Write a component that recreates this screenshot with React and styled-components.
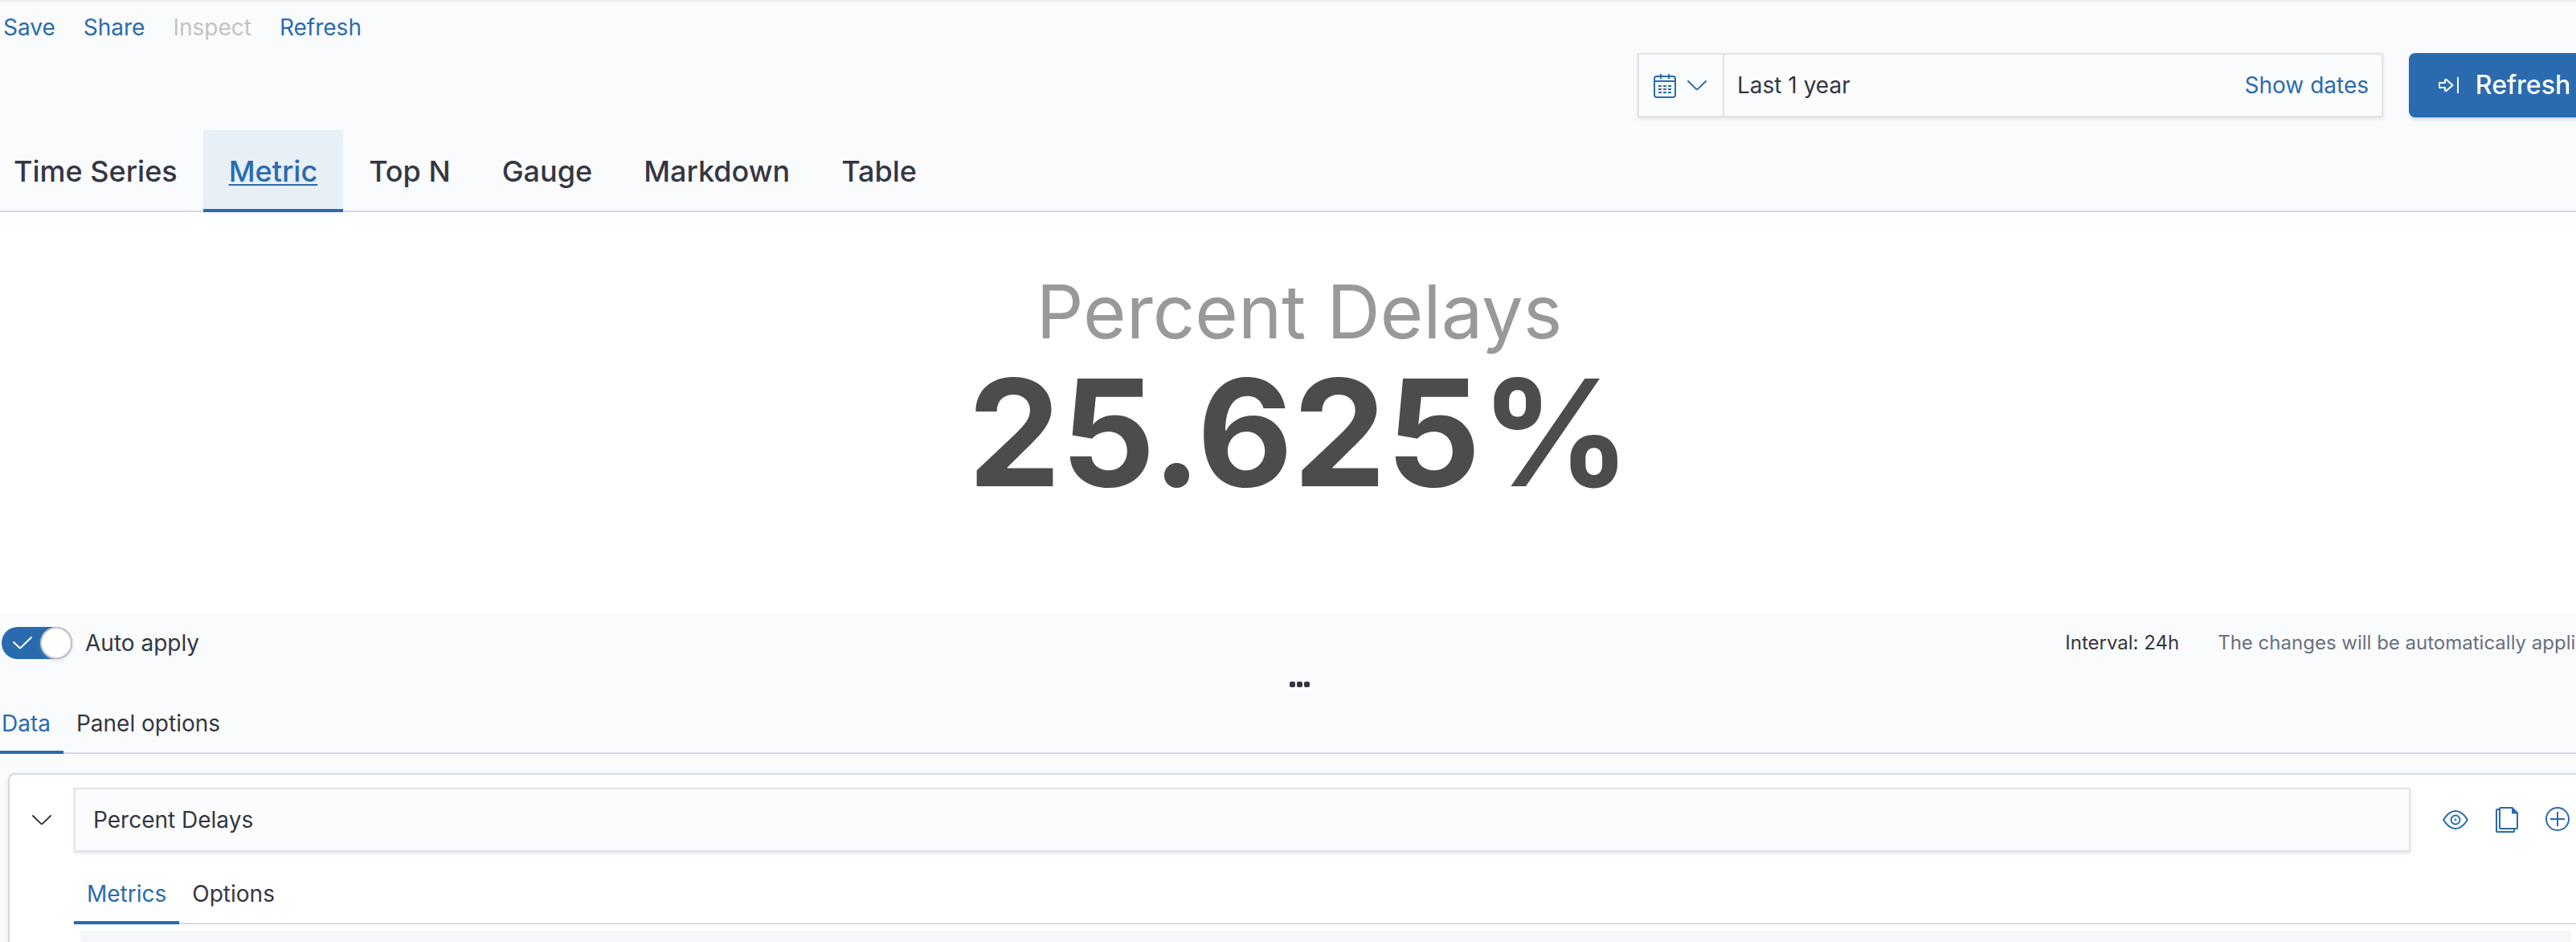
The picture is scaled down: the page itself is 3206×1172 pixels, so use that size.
import React, { useState } from "react";
import styled, { createGlobalStyle, css } from "styled-components";

const blue = "#2a6bb0";
const ink = "#343741";
const line = "#d3dae6";
const fieldLine = "#e0e2e5";

const menuItems = [
    { label: "Save" },
    { label: "Share" },
    { label: "Inspect", disabled: true },
    { label: "Refresh" },
];

const chartTypes = ["Time Series", "Metric", "Top N", "Gauge", "Markdown", "Table"];

const App = () => {
    const [chartType, setChartType] = useState("Metric");
    const [editorTab, setEditorTab] = useState("Data");
    const [seriesTab, setSeriesTab] = useState("Metrics");
    const [autoApply, setAutoApply] = useState(true);
    const [label, setLabel] = useState("Percent Delays");

    return (
        <Viewport>
            <GlobalStyle />
            <Page>
                <TopMenu>
                    {menuItems.map((item) => (
                        <MenuButton key={item.label} disabled={item.disabled}>
                            {item.label}
                        </MenuButton>
                    ))}
                </TopMenu>
                <QueryBar>
                    <DatePicker>
                        <QuickSelect aria-label="Date quick select">
                            <CalendarIcon />
                            <ChevronIcon />
                        </QuickSelect>
                        <RangeButton>
                            <span>Last 1 year</span>
                        </RangeButton>
                        <ShowDates>Show dates</ShowDates>
                    </DatePicker>
                    <RefreshButton>
                        <RefreshIcon />
                        Refresh
                    </RefreshButton>
                </QueryBar>
                <TypeTabs role="tablist">
                    {chartTypes.map((type) => (
                        <TypeTab
                            key={type}
                            role="tab"
                            aria-selected={type === chartType}
                            $active={type === chartType}
                            onClick={() => setChartType(type)}
                        >
                            {type}
                        </TypeTab>
                    ))}
                </TypeTabs>
                <MetricPanel>
                    <MetricLabel>{label}</MetricLabel>
                    <MetricValue>25.625%</MetricValue>
                </MetricPanel>
                <ControlBar>
                    <SwitchLabel htmlFor="auto-apply">
                        <SwitchBox>
                            <Switch
                                id="auto-apply"
                                type="checkbox"
                                role="switch"
                                checked={autoApply}
                                onChange={(e) => setAutoApply(e.target.checked)}
                            />
                            {autoApply && <CheckIcon />}
                        </SwitchBox>
                        Auto apply
                    </SwitchLabel>
                    <Status>
                        <span>Interval: 24h</span>
                        <Hint>The changes will be automatically applied</Hint>
                    </Status>
                </ControlBar>
                <ResizeHandle aria-label="Resize visualization">
                    <Dot />
                    <Dot />
                    <Dot />
                </ResizeHandle>
                <Tabs names={["Data", "Panel options"]} current={editorTab} onSelect={setEditorTab} flush />
                <Card>
                    <SeriesRow>
                        <IconButton aria-label="Collapse series" $wide>
                            <ChevronIcon dark />
                        </IconButton>
                        <LabelInput
                            aria-label="Series label"
                            value={label}
                            onChange={(e) => setLabel(e.target.value)}
                        />
                        <Actions>
                            <IconButton aria-label="Hide series"><EyeIcon /></IconButton>
                            <IconButton aria-label="Clone series"><CopyIcon /></IconButton>
                            <IconButton aria-label="Add series"><PlusIcon /></IconButton>
                        </Actions>
                    </SeriesRow>
                    <SeriesBody>
                        <Tabs names={["Metrics", "Options"]} current={seriesTab} onSelect={setSeriesTab} />
                        <AggPanel />
                    </SeriesBody>
                </Card>
            </Page>
        </Viewport>
    );
};

const Tabs = ({ names, current, onSelect, flush }) => {
    return (
        <TabList role="tablist">
            {names.map((name) => (
                <Tab
                    key={name}
                    role="tab"
                    aria-selected={name === current}
                    $active={name === current}
                    $flush={flush}
                    onClick={() => onSelect(name)}
                >
                    {name}
                </Tab>
            ))}
        </TabList>
    );
};

//icons, all on a 32px grid
const CalendarIcon = () => (
    <Icon viewBox="0 0 32 32">
        <rect x="3" y="5" width="26" height="26" rx="3" />
        <path d="M3 11h26M11 2v6M21 2v6" />
        <path d="M8 17h4M14 17h4M20 17h4M8 21h4M14 21h4M20 21h4M8 25h4M14 25h4M20 25h4" />
    </Icon>
);

const ChevronIcon = ({ dark }) => (
    <Icon viewBox="0 0 32 32" $color={dark && ink}>
        <path d="M5 11l9.6 9.4a2 2 0 0 0 2.8 0L27 11" strokeLinecap="round" />
    </Icon>
);

const RefreshIcon = () => (
    <Icon viewBox="0 0 32 32" $color="#fff">
        <path d="M3 13h7V9.8c0-.9 1-1.3 1.6-.7L19.5 16l-7.9 6.9c-.6.6-1.6.2-1.6-.7V19H3z" strokeLinejoin="round" />
        <path d="M26 6v20" />
    </Icon>
);

const EyeIcon = () => (
    <Icon viewBox="0 0 32 32">
        <path d="M1 16C5.500 9 10.500 5 16 5s10.500 4 15 11c-4.500 7-9.500 11-15 11S5.500 23 1 16z" strokeLinejoin="round" />
        <circle cx="16" cy="16" r="5.500" />
        <circle cx="16" cy="16" r="0.500" />
    </Icon>
);

const CopyIcon = () => (
    <Icon viewBox="0 0 32 32">
        <path d="M8 1h14.500L29 7.500V26a1 1 0 0 1-1 1H8a1 1 0 0 1-1-1V2a1 1 0 0 1 1-1z" />
        <path d="M23 2v5.500h5.500z" fill={blue} />
        <path d="M6 3H4a1 1 0 0 0-1 1v26a1 1 0 0 0 1 1h20a1 1 0 0 0 1-1v-2" />
    </Icon>
);

const PlusIcon = () => (
    <Icon viewBox="0 0 32 32">
        <circle cx="15" cy="15" r="14" />
        <path d="M15 6v18M6 15h18" />
    </Icon>
);

const CheckIcon = () => (
    <CheckMark viewBox="0 0 88 40">
        <path d="M15 19l8 7.500L37 13" />
    </CheckMark>
);

const GlobalStyle = createGlobalStyle`
    *, *::before {
        box-sizing: border-box;
    }
    body {
        margin: 0;
        background: #fafbfd;
        color: ${ink};
        font-family: Inter, "Liberation Sans", sans-serif;
        font-size: 28px;
        line-height: 40px;
    }
    button, input {
        margin: 0;
        padding: 0;
        border: 0;
        background: none;
        color: inherit;
        font: inherit;
    }
    button {
        cursor: pointer;
        white-space: nowrap;
    }
`;

const Viewport = styled.div`
    overflow: hidden;
`;

//the page runs a little past the right edge of the window
const Page = styled.div`
    display: flex;
    flex-direction: column;
    min-height: 100vh;
    margin-right: -28px;
    box-shadow: inset 0 6px 4px -4px rgba(0, 0, 0, 0.08);
`;

const Icon = styled.svg`
    display: block;
    flex: none;
    width: 32px;
    height: 32px;
    fill: none;
    stroke: ${({ $color }) => $color || blue};
    stroke-width: 2;
`;

const TopMenu = styled.nav`
    display: flex;
    gap: 35px;
    padding: 14px 4px 12px;
`;

const MenuButton = styled.button`
    color: ${blue};
    &:disabled{
        color: #c2c3c6;
        cursor: default;
    }
`;

const QueryBar = styled.div`
    display: flex;
    justify-content: flex-end;
    gap: 32px;
    margin-bottom: 16px;
`;

const field = css`
    height: 80px;
    border: 2px solid ${fieldLine};
    background: #fbfcfe;
    box-shadow: 0 2px 4px rgba(152, 162, 179, 0.25);
`;

const DatePicker = styled.div`
    ${field}
    display: flex;
    width: 928px;
    max-width: 60%;
`;

const QuickSelect = styled.button`
    display: flex;
    align-items: center;
    gap: 8px;
    padding: 0 16px;
    border-right: 2px solid ${fieldLine};
`;

const RangeButton = styled.button`
    flex: 1;
    padding: 0 16px;
    text-align: left;
`;

const ShowDates = styled.button`
    padding: 0 16px;
    color: ${blue};
`;

const RefreshButton = styled.button`
    display: flex;
    align-items: center;
    justify-content: center;
    gap: 16px;
    min-width: 236px;
    height: 80px;
    border-radius: 8px;
    background: ${blue};
    color: #fff;
    font-size: 32px;
    font-weight: 500;
    box-shadow: 0 4px 4px -2px rgba(54, 97, 126, 0.3);
`;

const TypeTabs = styled.div`
    display: flex;
    box-shadow: inset 0 -2px 0 ${line};
`;

const TypeTab = styled.button`
    padding: 24px 32px;
    font-size: 36px;
    font-weight: 500;
    line-height: 54px;
    &:first-child{
        padding-left: 17px;
    }
    ${({ $active }) => $active && css`
        background: #e7eff7;
        box-shadow: inset 0 -4px 0 ${blue};
        color: ${blue};
        text-decoration: underline;
        text-decoration-thickness: 2px;
        text-underline-offset: 3px;
        text-decoration-skip-ink: none;
    `}
`;

const MetricPanel = styled.section`
    padding: 74px 0 126px;
    background: #fff;
    text-align: center;
`;

const MetricLabel = styled.div`
    color: #999;
    font-size: 92px;
    line-height: 100px;
`;

const MetricValue = styled.div`
    color: #4c4c4c;
    font-size: 184px;
    font-weight: 700;
    line-height: 200px;
`;

const ControlBar = styled.div`
    display: flex;
    align-items: center;
    justify-content: space-between;
    padding: 16px 0 20px 2px;
`;

const SwitchLabel = styled.label`
    display: flex;
    gap: 16px;
    cursor: pointer;
`;

const SwitchBox = styled.span`
    position: relative;
    width: 88px;
    height: 40px;
`;

const Switch = styled.input`
    display: flex;
    appearance: none;
    width: 100%;
    height: 100%;
    border-radius: 20px;
    background: #98a2b3;
    cursor: pointer;
    &::before{
        content: "";
        width: 40px;
        height: 40px;
        border: 2px solid #c3c7cf;
        border-radius: 50%;
        background: #fff;
        box-shadow: 0 2px 4px rgba(152, 162, 179, 0.3);
    }
    &:checked{
        justify-content: flex-end;
        background: ${blue};
    }
`;

const CheckMark = styled.svg`
    position: absolute;
    inset: 0;
    fill: none;
    stroke: #fff;
    stroke-width: 2;
    stroke-linecap: round;
    stroke-linejoin: round;
    pointer-events: none;
`;

const Status = styled.div`
    display: flex;
    gap: 48px;
    font-size: 24px;
    white-space: nowrap;
`;

const Hint = styled.span`
    color: #69707d;
`;

const ResizeHandle = styled.button`
    display: flex;
    align-items: center;
    justify-content: center;
    gap: 2px;
    height: 22px;
`;

const Dot = styled.span`
    width: 7px;
    height: 7px;
    border-radius: 2px;
    background: ${ink};
`;

const TabList = styled.div`
    display: flex;
    box-shadow: inset 0 -2px 0 ${line};
`;

const Tab = styled.button`
    padding: 18px 16px;
    ${({ $flush }) => $flush && css`
        &:first-child{
            padding-left: 2px;
        }
    `}
    ${({ $active }) => $active && css`
        color: ${blue};
        box-shadow: inset 0 -4px 0 ${blue};
    `}
`;

const Card = styled.section`
    display: flex;
    flex: 1;
    flex-direction: column;
    margin: 24px 0 0 10px;
    padding: 16px 16px 0 0;
    border: 2px solid ${line};
    border-bottom: 0;
    border-radius: 8px 8px 0 0;
    background: #fff;
    box-shadow: 0 2px 6px rgba(152, 162, 179, 0.2);
`;

const SeriesRow = styled.div`
    display: flex;
    align-items: center;
`;

const IconButton = styled.button`
    padding: ${({ $wide }) => ($wide ? "16px 24px" : "16px")};
`;

const LabelInput = styled.input`
    ${field}
    flex: 1;
    min-width: 0;
    padding: 0 22px;
`;

const Actions = styled.div`
    display: flex;
    margin-left: 24px;
`;

const SeriesBody = styled.div`
    display: flex;
    flex: 1;
    flex-direction: column;
    margin: 14px 0 0 80px;
`;

const AggPanel = styled.div`
    flex: 1;
    min-height: 14px;
    margin: 8px 16px 0 8px;
    background: #f5f7fa;
`;

export default App;
